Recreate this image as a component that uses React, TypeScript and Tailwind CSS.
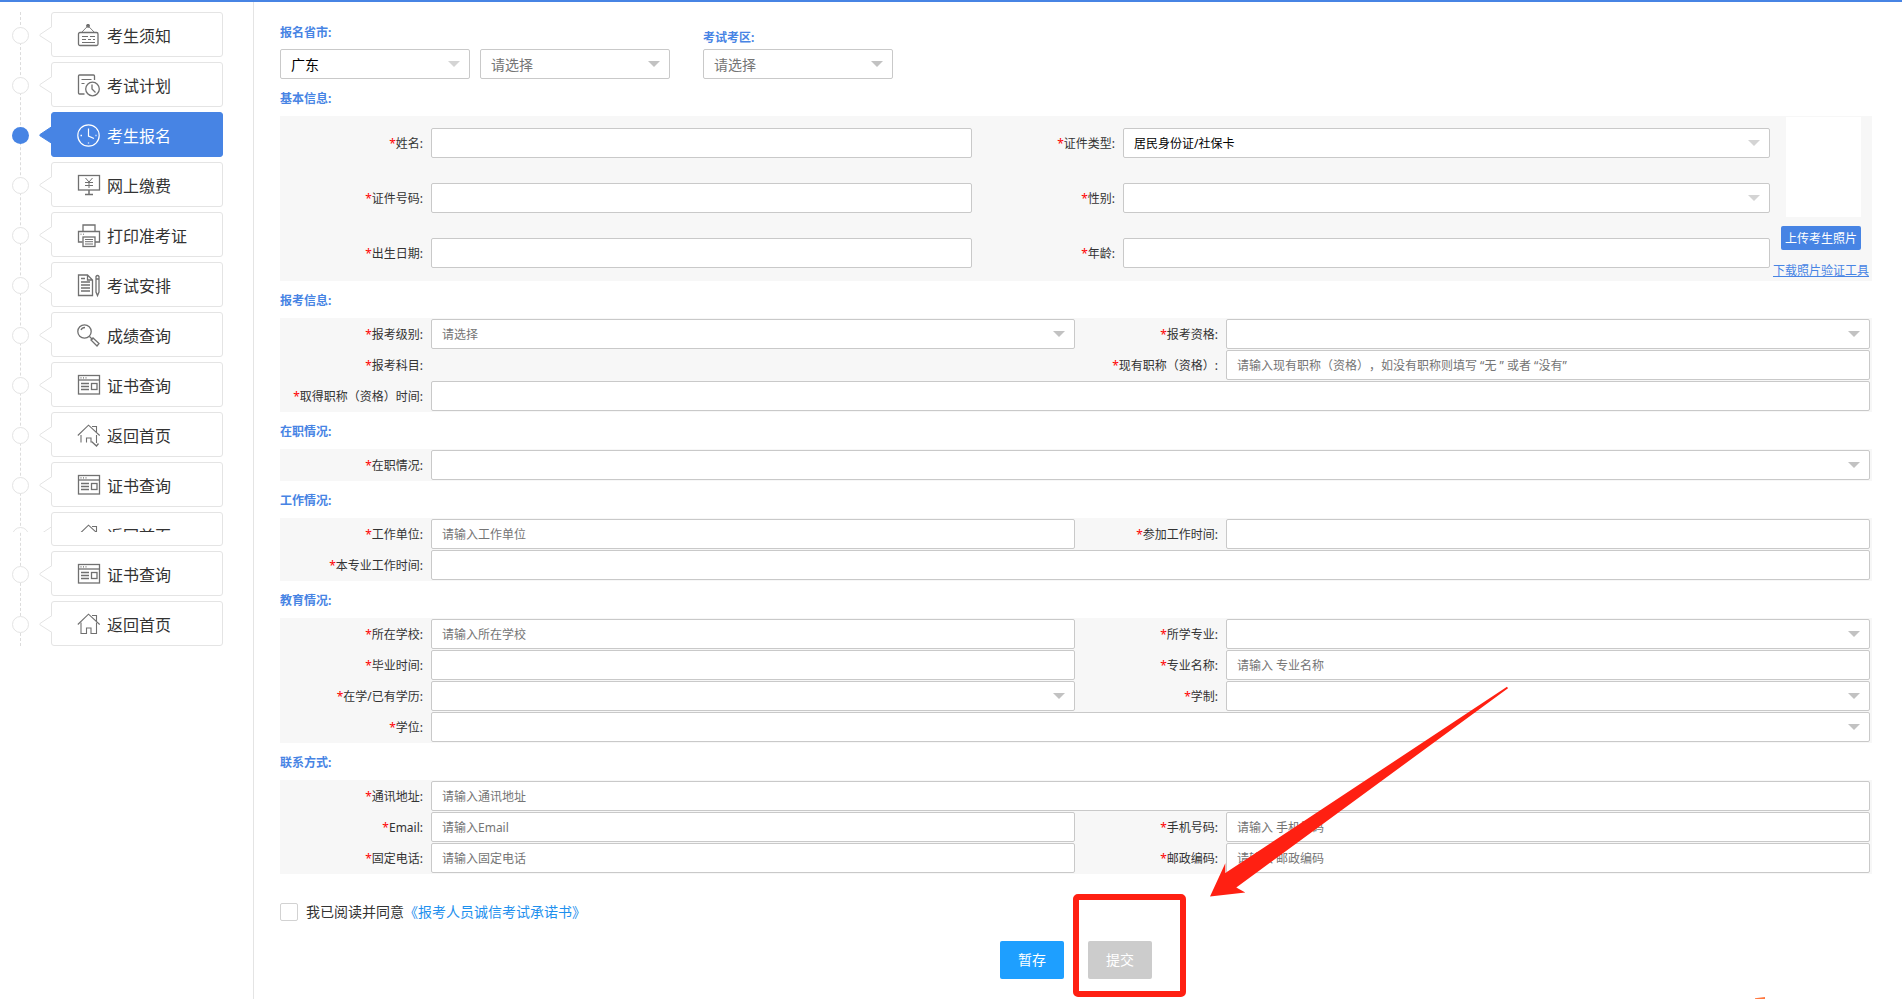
import { ReactNode } from 'react';

type IconName = 'notice' | 'plan' | 'clock' | 'pay' | 'print' | 'arrange' | 'search' | 'cert' | 'home' | 'homeCut';

function Icon({ name }: { name: IconName }) {
  const shapes: Record<IconName, ReactNode> = {
    notice: (
      <>
        <circle cx="11" cy="1.800" r="1.300" fill="currentColor" />
        <path d="M9.800 3 4.500 8.500M12.200 3 17.500 8.500" strokeWidth="0.900" />
        <rect x="1.500" y="8.500" width="19.500" height="13" rx="1.500" />
        <path d="M5 12.500h6M13 12.500h5M5 15.500h4M11 15.500h3M16 15.500h2M5 18.500h13" strokeWidth="1" />
      </>
    ),
    plan: (
      <>
        <path d="M17.500 6V2q0-1-1-1h-14q-1 0-1 1v17q0 1 1 1h5" />
        <path d="M4.500 5.500h10M4.500 9.500h3" strokeWidth="1" />
        <circle cx="15.500" cy="15" r="6.800" />
        <path d="M15 10.500V15l3.500 3.500" />
      </>
    ),
    clock: (
      <>
        <circle cx="11.500" cy="11.500" r="10.700" strokeWidth="1.200" />
        <path d="M11.500 4.500v7.500l5.500 2.500" strokeWidth="1.200" />
        <path d="M3.500 11.500h1.500M18.500 11.500h1M11.500 18.500v1" />
      </>
    ),
    pay: (
      <>
        <rect x="1.500" y="1.500" width="21" height="14.500" />
        <path d="M8.500 4l3.500 4 3.500-4M12 8v6M8 8.500h8M8 11.500h8" strokeWidth="1" />
        <path d="M12 16v4M8 20.500h8" strokeWidth="1.500" />
      </>
    ),
    print: (
      <>
        <path d="M6 7V1h12v6M5.500 18H1.500V7.500h21V18H18" />
        <rect x="6" y="13" width="12" height="9.500" />
        <path d="M8 15.500h8M8 17.700h8M8 20h8M3.500 10.200h1M6 10.200h1" strokeWidth="1" />
      </>
    ),
    arrange: (
      <>
        <path d="M10.500 1H1.500v20.500h14V6zM10.500 1v5h5" />
        <path d="M4 4.500h4M4 8h9M4 11h9M4 14h9M4 17h9M19 4v14l1.500 3.500L22 18V2.500q-1.500-2-3 0zM19 5h3" />
      </>
    ),
    search: (
      <>
        <circle cx="7.500" cy="7.500" r="6.700" />
        <path d="M4 6q1-2.500 4-2.500M12.500 12.500l3 3" />
        <path d="M14 16l2-2 6 5.500-2 2.500z" />
      </>
    ),
    cert: (
      <>
        <rect x="1.500" y="1.500" width="21" height="18.500" />
        <path d="M1.500 6h21" />
        <path d="M3.500 3.800h1M6 3.800h1M8.500 3.800h1M4 9.500h8M4 12.500h8M4 15.500h8" />
        <rect x="14.500" y="9.500" width="5.500" height="6" />
      </>
    ),
    home: (
      <>
        <path d="M.8 11.500 11.500 1.200l11.200 10.300M15 2.500h4.500V8" strokeWidth="1.100" />
        <path d="M4 9.500V20.500h5.500V15h4.500v5.500h5.500V9.500" strokeWidth="1.100" />
      </>
    ),
    homeCut: (
      <>
        <path d="M.8 11.500 11.500 1.200l11.200 10.300M15 2.500h4.500V8" strokeWidth="1.100" />
        <path d="M4 11V18.500M9.500 18.500V14h4.500v4.500M19.500 11v8" strokeWidth="1.100" />
        <path d="M14.500 17.500l5 4.500 2-2.500" />
      </>
    ),
  };
  return (
    <svg viewBox="0 0 24 24" className="size-6 shrink-0" fill="none" stroke="currentColor" strokeWidth="1.300" aria-hidden="true">
      {shapes[name]}
    </svg>
  );
}

type NavEntry = { label: string; icon: IconName; active?: boolean; clipped?: boolean };

const nav: NavEntry[] = [
  { label: '考生须知', icon: 'notice' },
  { label: '考试计划', icon: 'plan' },
  { label: '考生报名', icon: 'clock', active: true },
  { label: '网上缴费', icon: 'pay' },
  { label: '打印准考证', icon: 'print' },
  { label: '考试安排', icon: 'arrange' },
  { label: '成绩查询', icon: 'search' },
  { label: '证书查询', icon: 'cert' },
  { label: '返回首页', icon: 'homeCut' },
  { label: '证书查询', icon: 'cert' },
  { label: '返回首页', icon: 'home', clipped: true },
  { label: '证书查询', icon: 'cert' },
  { label: '返回首页', icon: 'home' },
];

function NavItem({ label, icon, active, clipped }: NavEntry) {
  return (
    <li className={clipped ? 'relative flex h-[34px]' : 'relative flex h-[45px]'}>
      <div className={clipped ? 'flex h-5 w-[39px] items-start overflow-hidden' : 'flex w-[39px] items-start'}>
        <span
          className={
            active
              ? 'mt-[15px] size-[17px] shrink-0 rounded-full bg-[#4784e4]'
              : 'mt-[15px] size-[17px] shrink-0 rounded-full border border-[#e4e4e4] bg-white'
          }
        />
        <svg viewBox="0 0 13 20" className="relative z-10 mt-[13px] ml-[10px] h-5 w-[13px] shrink-0" aria-hidden="true">
          <path
            d="M13 1.500 1 9.500q-.8.700 0 1.300L13 18.500"
            fill={active ? '#4784e4' : '#fff'}
            stroke={active ? '#4784e4' : '#e4e4e4'}
          />
        </svg>
      </div>
      <a
        href="#"
        className={
          active
            ? 'flex flex-1 items-start rounded-[3px] border border-[#4784e4] bg-[#4784e4] text-white'
            : 'flex flex-1 items-start rounded-[3px] border border-[#e4e4e4] bg-white text-[#333333]'
        }
      >
        <span className={clipped ? 'flex h-[19px] items-start overflow-hidden pl-[25px]' : 'flex items-start pl-[25px]'}>
          <span className={active ? 'pt-[11px]' : 'pt-[11px] text-[#707070]'}>
            <Icon name={icon} />
          </span>
          <span className="pt-[11px] pl-[6px] text-base leading-6">{label}</span>
        </span>
      </a>
    </li>
  );
}

function SectionTitle({ children }: { children: ReactNode }) {
  return <h2 className="flex h-[37px] items-center pt-[2px] text-xs font-bold text-[#4784e4]">{children}</h2>;
}

type ControlProps = { id: string; kind?: 'input' | 'select' | 'none'; text?: string; disabled?: boolean; large?: boolean };

function Control({ id, kind = 'input', text = '', disabled, large }: ControlProps) {
  if (kind === 'none') return <div id={id} className="h-[30px]" />;
  if (kind === 'input') {
    return (
      <input
        id={id}
        type="text"
        placeholder={text}
        className="block h-[30px] w-full min-w-0 rounded-[2px] border border-[#c9c9c9] bg-white px-[10px] pt-px text-xs text-black [text-spacing-trim:space-all] placeholder:text-[#757575]"
      />
    );
  }
  return (
    <div className="relative">
      <select
        id={id}
        disabled={disabled}
        className={
          (large ? 'text-sm ' : 'text-xs ') +
          (disabled ? 'text-black ' : 'text-[#757575] ') +
          'block h-[30px] w-full appearance-none rounded-[2px] border border-[#c9c9c9] bg-white px-[10px] pt-px opacity-100'
        }
      >
        <option>{text}</option>
      </select>
      <span
        className={
          (disabled ? 'border-t-[#d4d4d4] ' : 'border-t-[#c2c2c2] ') +
          'pointer-events-none absolute top-3 right-[10px] border-x-[6px] border-t-[6px] border-x-transparent'
        }
      />
    </div>
  );
}

function FieldLabel({ htmlFor, children }: { htmlFor: string; children: ReactNode }) {
  return (
    <label htmlFor={htmlFor} className="pt-px pr-2 text-right text-xs whitespace-nowrap text-[#333333] [text-spacing-trim:space-all]">
      <span className="text-[#ff0000]">*</span>
      {children}
    </label>
  );
}

type FieldDef = ControlProps & { label: string; wide?: boolean };

function FieldPanel({ fields }: { fields: FieldDef[] }) {
  return (
    <div className="grid grid-cols-2 gap-y-px bg-[#f7f7f7] py-px pr-[2px]">
      {fields.map(({ label, wide, ...control }) => (
        <div
          key={control.id}
          className={
            wide ? 'col-span-2 grid grid-cols-[151px_1fr] items-center' : 'grid grid-cols-[151px_1fr] items-center'
          }
        >
          <FieldLabel htmlFor={control.id}>{label}</FieldLabel>
          <Control {...control} />
        </div>
      ))}
    </div>
  );
}

export default function App() {
  return (
    <div className="relative flex min-h-screen overflow-hidden border-t-2 border-[#4784e4] bg-white font-['Noto_Sans','Noto_Sans_CJK_SC',sans-serif]">
      <nav className="w-[254px] shrink-0 border-r border-[#e4e4e4] pt-[10px] pl-3">
        <div className="relative w-[211px]">
          <div className="absolute inset-y-0 left-2 border-l border-dashed border-[#dcdcdc]" />
          <ul className="flex flex-col gap-[5px]">
            {nav.map((entry, i) => (
              <NavItem key={i} {...entry} />
            ))}
          </ul>
        </div>
      </nav>

      <main className="min-w-0 flex-1 pr-[30px] pl-[26px]">
        <div className="flex h-[77px] items-end text-xs">
          <div>
            <label htmlFor="province" className="mb-2 block leading-4 font-bold text-[#4784e4]">报名省市:</label>
            <div className="flex gap-[10px]">
              <div className="w-[190px]">
                <Control id="province" kind="select" text="广东" disabled large />
              </div>
              <div className="w-[190px]">
                <Control id="city" kind="select" text="请选择" large />
              </div>
            </div>
          </div>
          <div className="ml-[33px] w-[190px]">
            <label htmlFor="district" className="mb-[3px] block leading-4 font-bold text-[#4784e4]">考试考区:</label>
            <Control id="district" kind="select" text="请选择" large />
          </div>
        </div>

        <SectionTitle>基本信息:</SectionTitle>
        <div className="flex h-[165px] bg-[#f7f7f7]">
          <div className="grid flex-1 grid-cols-[151px_541fr_151px_647fr] content-start items-center gap-y-[25px] pt-3">
            <FieldLabel htmlFor="name">姓名:</FieldLabel>
            <Control id="name" />
            <FieldLabel htmlFor="idType">证件类型:</FieldLabel>
            <Control id="idType" kind="select" text="居民身份证/社保卡" disabled />
            <FieldLabel htmlFor="idNo">证件号码:</FieldLabel>
            <Control id="idNo" />
            <FieldLabel htmlFor="gender">性别:</FieldLabel>
            <Control id="gender" kind="select" disabled />
            <FieldLabel htmlFor="birth">出生日期:</FieldLabel>
            <Control id="birth" />
            <FieldLabel htmlFor="age">年龄:</FieldLabel>
            <Control id="age" />
          </div>
          <div className="flex w-[102px] shrink-0 flex-col items-center pt-px text-xs">
            <div className="mr-[11px] h-[100px] w-[75px] self-end bg-white" />
            <button type="button" className="mt-[9px] h-6 w-20 rounded-[2px] bg-[#4784e4] pt-px text-center whitespace-nowrap text-white">
              上传考生照片
            </button>
            <a href="#" className="mt-[13px] leading-4 whitespace-nowrap text-[#4784e4] underline">
              下载照片验证工具
            </a>
          </div>
        </div>

        <SectionTitle>报考信息:</SectionTitle>
        <FieldPanel
          fields={[
            { id: 'level', label: '报考级别:', kind: 'select', text: '请选择' },
            { id: 'qualification', label: '报考资格:', kind: 'select' },
            { id: 'subject', label: '报考科目:', kind: 'none' },
            { id: 'currentTitle', label: '现有职称（资格）:', text: '请输入现有职称（资格），如没有职称则填写 “无 ” 或者 “没有”' },
            { id: 'titleDate', label: '取得职称（资格）时间:', wide: true },
          ]}
        />

        <SectionTitle>在职情况:</SectionTitle>
        <FieldPanel fields={[{ id: 'employment', label: '在职情况:', kind: 'select', wide: true }]} />

        <SectionTitle>工作情况:</SectionTitle>
        <FieldPanel
          fields={[
            { id: 'employer', label: '工作单位:', text: '请输入工作单位' },
            { id: 'workStart', label: '参加工作时间:' },
            { id: 'professionTime', label: '本专业工作时间:', wide: true },
          ]}
        />

        <SectionTitle>教育情况:</SectionTitle>
        <FieldPanel
          fields={[
            { id: 'school', label: '所在学校:', text: '请输入所在学校' },
            { id: 'major', label: '所学专业:', kind: 'select' },
            { id: 'graduation', label: '毕业时间:' },
            { id: 'majorName', label: '专业名称:', text: '请输入 专业名称' },
            { id: 'education', label: '在学/已有学历:', kind: 'select' },
            { id: 'duration', label: '学制:', kind: 'select' },
            { id: 'degree', label: '学位:', kind: 'select', wide: true },
          ]}
        />

        <SectionTitle>联系方式:</SectionTitle>
        <FieldPanel
          fields={[
            { id: 'address', label: '通讯地址:', text: '请输入通讯地址', wide: true },
            { id: 'email', label: 'Email:', text: '请输入Email' },
            { id: 'mobile', label: '手机号码:', text: '请输入 手机号码' },
            { id: 'phone', label: '固定电话:', text: '请输入固定电话' },
            { id: 'postcode', label: '邮政编码:', text: '请输入 邮政编码' },
          ]}
        />

        <div className="mt-[29px] flex h-[18px] items-center text-sm text-[#333333]">
          <input id="agree" type="checkbox" className="mr-2 size-[18px] appearance-none rounded-[2px] border border-[#d2d2d2] bg-white" />
          <label htmlFor="agree">我已阅读并同意</label>
          <a href="#" className="text-[#1e90ee]">《报考人员诚信考试承诺书》</a>
        </div>

        <div className="mt-5 flex justify-center gap-6 text-sm text-white">
          <button type="button" className="h-[38px] w-16 rounded-[2px] bg-[#1e9fff]">暂存</button>
          <div className="relative">
            <button type="button" className="h-[38px] w-16 rounded-[2px] bg-[#cccccc]">提交</button>
            <div className="pointer-events-none absolute -top-[47px] -left-[15px] h-[103px] w-[113px] rounded-[5px] border-[6px] border-[#ff2012]" />
            <svg viewBox="0 0 300 212" className="pointer-events-none absolute -top-[255px] left-[121px] h-[212px] w-[300px]" aria-hidden="true">
              <path
                d="M1 210.500 16.300 177.300v9.700L298 .8l1 1.400L27.300 201.500l9 5z"
                fill="#ff2012"
              />
            </svg>
          </div>
        </div>
      </main>
      <svg viewBox="0 0 10 2" className="absolute right-[137px] bottom-0 h-[2px] w-[10px]" aria-hidden="true">
        <path d="M0 1.300 10 0v2H0z" fill="#ff7840" />
      </svg>
    </div>
  );
}
